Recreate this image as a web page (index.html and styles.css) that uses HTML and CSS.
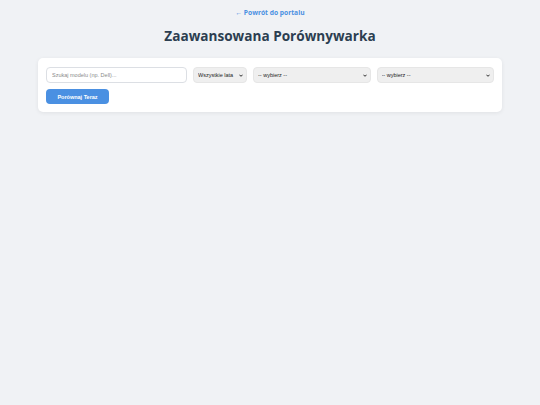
FILE: index.html
```html
<!DOCTYPE html>
<html lang="pl">
<head>
<meta charset="utf-8">
<title>Zaawansowana Porównywarka</title>
<link rel="stylesheet" href="styles.css">
</head>
<body>
<div class="page">
  <a class="back" href="#">← Powrót do portalu</a>
  <h1 class="title">Zaawansowana Porównywarka</h1>
  <div class="card">
    <div class="filters">
      <input class="search" type="text" placeholder="Szukaj modelu (np. Dell)...">
      <div class="sel-wrap">
        <select class="sel"><option>Wszystkie lata</option></select>
        <svg class="chev" viewBox="0 0 10 6" aria-hidden="true"><path d="M1 1l4 4 4-4" fill="none" stroke="#222" stroke-width="2.4"/></svg>
      </div>
      <div class="sel-wrap">
        <select class="sel"><option>-- wybierz --</option></select>
        <svg class="chev" viewBox="0 0 10 6" aria-hidden="true"><path d="M1 1l4 4 4-4" fill="none" stroke="#222" stroke-width="2.4"/></svg>
      </div>
      <div class="sel-wrap">
        <select class="sel"><option>-- wybierz --</option></select>
        <svg class="chev" viewBox="0 0 10 6" aria-hidden="true"><path d="M1 1l4 4 4-4" fill="none" stroke="#222" stroke-width="2.4"/></svg>
      </div>
    </div>
    <button class="btn" type="button">Porównaj Teraz</button>
  </div>
</div>
</body>
</html>
```
FILE: styles.css
```css
html, body {
  margin: 0;
  padding: 0;
  background: #f0f2f5;
  height: 100%;
}
body {
  font-family: "Open Sans", "Noto Sans", sans-serif;
}
.page {
  padding: 7px 38px 0;
  display: flex;
  flex-direction: column;
  align-items: center;
}
.back {
  color: #4a90e2;
  font-size: 6.7px;
  font-weight: 700;
  text-decoration: none;
  line-height: 12px;
}
.title {
  margin: 6px 0 12px;
  font-size: 13.6px;
  line-height: 21px;
  font-weight: 700;
  color: #2c3e50;
}
.card {
  align-self: stretch;
  background: #fff;
  border-radius: 5px;
  box-shadow: 0 1px 4px rgba(0,0,0,0.07);
  padding: 9px 8px 8px;
  display: flex;
  flex-direction: column;
  align-items: flex-start;
  gap: 6px;
}
.filters {
  align-self: stretch;
  display: grid;
  grid-template-columns: 141px 54px 1fr 1fr;
  gap: 6px;
}
.search, .sel {
  box-sizing: border-box;
  height: 16px;
  width: 100%;
  border-radius: 4px;
  font-family: "Liberation Sans", Arial, sans-serif;
  font-size: 5.5px;
  margin: 0;
}
.search {
  border: 1px solid #dcdfe4;
  background: #fff;
  padding: 0 5px;
  color: #333;
}
.search::placeholder {
  color: #8a8a8a;
}
.sel-wrap {
  position: relative;
}
.sel {
  appearance: none;
  -webkit-appearance: none;
  border: 1px solid #e6e6e6;
  background: #efefef;
  color: #222;
  padding: 0 4px;
  display: block;
}
.chev {
  position: absolute;
  right: 4px;
  top: 6.5px;
  width: 4px;
  height: 3px;
  pointer-events: none;
}
.btn {
  height: 15px;
  width: 63px;
  border: none;
  border-radius: 4px;
  background: #4a90e2;
  color: #fff;
  font-family: "Liberation Sans", Arial, sans-serif;
  font-size: 5.5px;
  font-weight: 700;
  padding: 0;
}
```
